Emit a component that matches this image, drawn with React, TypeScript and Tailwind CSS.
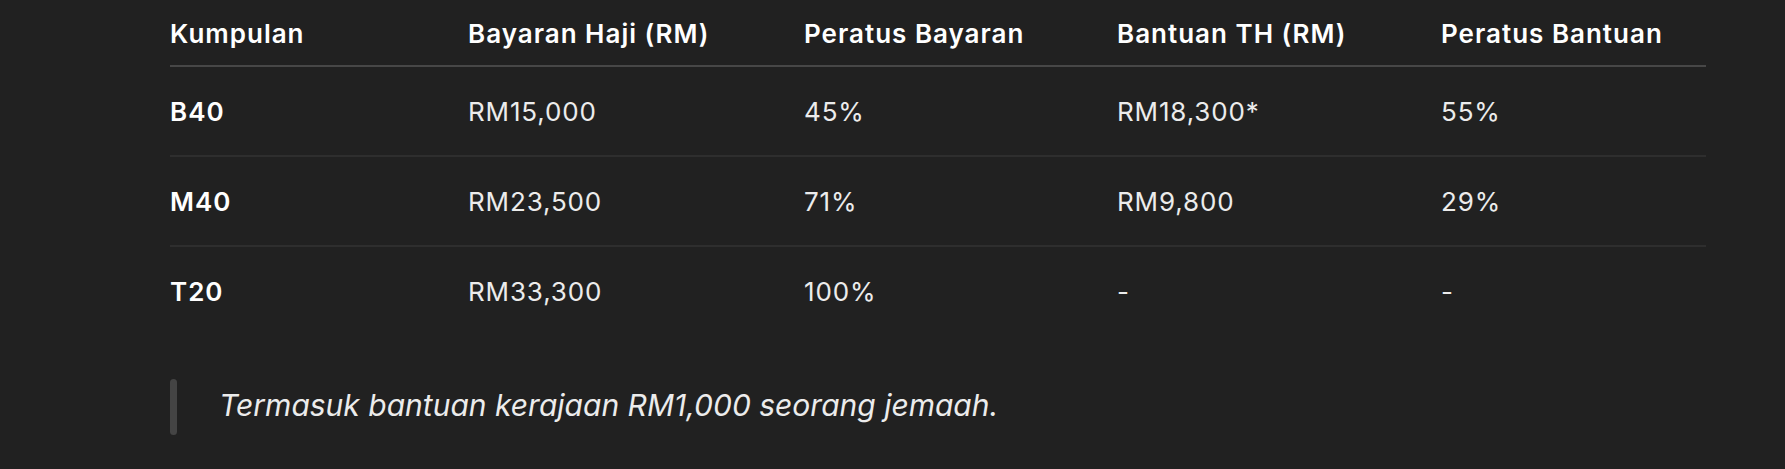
import React from "react";

const rows = [
  ["B40", "RM15,000", "45%", "RM18,300*", "55%"],
  ["M40", "RM23,500", "71%", "RM9,800", "29%"],
  ["T20", "RM33,300", "100%", "-", "-"],
];

const headers = [
  "Kumpulan",
  "Bayaran Haji (RM)",
  "Peratus Bayaran",
  "Bantuan TH (RM)",
  "Peratus Bantuan",
];

export default function App() {
  return (
    <div
      className="w-[1785px] h-[469px] bg-[#212121] text-[#ececec] overflow-hidden"
      style={{ fontFamily: "Inter, 'Noto Sans', sans-serif" }}
    >
      <div className="pl-[170px]">
        <table className="w-[1536px] table-fixed border-collapse text-[26px] leading-[39px]">
          <colgroup>
            <col className="w-[298px]" />
            <col className="w-[336px]" />
            <col className="w-[313px]" />
            <col className="w-[324px]" />
            <col className="w-[265px]" />
          </colgroup>
          <thead>
            <tr className="border-b-2 border-[#474747]">
              {headers.map((h) => (
                <th
                  key={h}
                  className="h-[65px] pt-[14px] pb-[12px] p-0 text-left align-top font-semibold text-white tracking-[1px]"
                >
                  {h}
                </th>
              ))}
            </tr>
          </thead>
          <tbody>
            {rows.map((r, i) => (
              <tr
                key={r[0]}
                className={i < rows.length - 1 ? "border-b-2 border-[#2e2e2e]" : ""}
              >
                {r.map((c, j) => (
                  <td
                    key={j}
                    className={
                      "h-[90px] p-0 align-middle text-left " +
                      (j === 0
                        ? "font-semibold text-white tracking-[1px]"
                        : "font-normal tracking-[0.85px]")
                    }
                  >
                    {c}
                  </td>
                ))}
              </tr>
            ))}
          </tbody>
        </table>
        <div className="mt-[43px] flex items-center gap-[42px]">
          <div className="w-[7px] h-[56px] rounded-full bg-[#444444]" />
          <p className="italic text-[30px] leading-[46px] text-[#ececec] -mt-[5px]">
            Termasuk bantuan kerajaan RM1,000 seorang jemaah.
          </p>
        </div>
      </div>
    </div>
  );
}
